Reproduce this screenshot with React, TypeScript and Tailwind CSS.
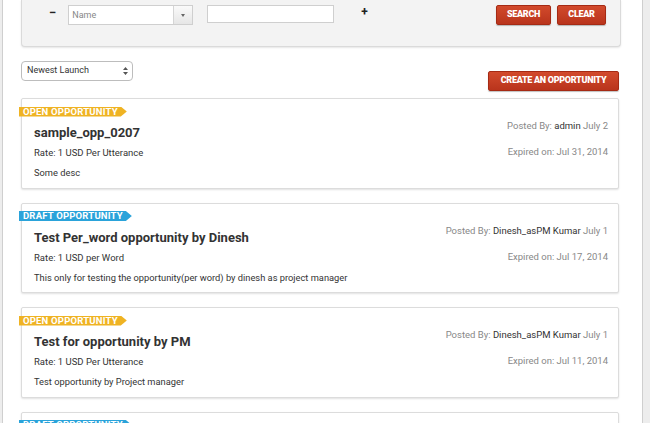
import React from "react";

type Opp = {
  status: "open" | "draft";
  title: string;
  rate: string;
  desc: string;
  poster: string;
  posted: string;
  expires: string;
};

const opps: Opp[] = [
  {
    status: "open",
    title: "sample_opp_0207",
    rate: "Rate: 1 USD Per Utterance",
    desc: "Some desc",
    poster: "admin",
    posted: "July 2",
    expires: "Jul 31, 2014",
  },
  {
    status: "draft",
    title: "Test Per_word opportunity by Dinesh",
    rate: "Rate: 1 USD per Word",
    desc: "This only for testing the opportunity(per word) by dinesh as project manager",
    poster: "Dinesh_asPM Kumar",
    posted: "July 1",
    expires: "Jul 17, 2014",
  },
  {
    status: "open",
    title: "Test for opportunity by PM",
    rate: "Rate: 1 USD Per Utterance",
    desc: "Test opportunity by Project manager",
    poster: "Dinesh_asPM Kumar",
    posted: "July 1",
    expires: "Jul 11, 2014",
  },
  {
    status: "draft",
    title: "Another draft opportunity",
    rate: "Rate: 1 USD per Word",
    desc: "Draft description",
    poster: "admin",
    posted: "June 30",
    expires: "Jul 10, 2014",
  },
];

const StatusTag: React.FC<{ status: Opp["status"] }> = ({ status }) => (
  <div
    className={`absolute left-[-3px] top-[7.5px] flex h-[10px] items-center pl-[4px] pr-[9px] text-[9.5px] font-bold leading-none tracking-[0.2px] text-white [clip-path:polygon(0_0,calc(100%-6px)_0,100%_50%,calc(100%-6px)_100%,0_100%)] ${
      status === "open" ? "bg-[#efb323]" : "bg-[#2aa3da]"
    }`}
  >
    {status === "open" ? "OPEN OPPORTUNITY" : "DRAFT OPPORTUNITY"}
  </div>
);

const OppCard: React.FC<{ opp: Opp }> = ({ opp }) => (
  <div className="relative w-[598px] shrink-0 rounded-[2px] border border-[#dcdcdc] bg-white shadow-[0_1px_2px_rgba(0,0,0,0.12)]">
    <StatusTag status={opp.status} />
    <div className="flex items-start justify-between pl-[12px] pr-[10px] pb-[7.5px]">
      <div className="flex flex-col pt-[24px]">
        <h3 className="h-[20px] text-[13px] font-bold leading-[20px] text-[#333]">
          {opp.title}
        </h3>
        <div className="mt-[3px] h-[14px] text-[9.5px] leading-[14px] text-[#333]">
          {opp.rate}
        </div>
        <div className="mt-[6px] h-[14px] text-[9.3px] leading-[14px] text-[#333]">
          {opp.desc}
        </div>
      </div>
      <div className="flex flex-col items-end pt-[20px] text-[9.5px] leading-[14px] text-[#888]">
        <div>
          Posted By: <span className="text-[#333]">{opp.poster}</span> {opp.posted}
        </div>
        <div className="mt-[12px]">Expired on: {opp.expires}</div>
      </div>
    </div>
  </div>
);

const RedButton: React.FC<{ label: string; className?: string }> = ({ label, className }) => (
  <button
    className={`flex h-[20px] items-center justify-center rounded-[2px] border border-[#a52a14] bg-gradient-to-b from-[#d24a2c] to-[#b9341c] text-[9px] font-black tracking-[-0.3px] text-white shadow-[0_1px_1px_rgba(0,0,0,0.25)] ${className ?? ""}`}
  >
    {label}
  </button>
);

export default function App() {
  return (
    <div className="h-[423px] w-[650px] overflow-hidden bg-[#ededed] font-['Roboto','Liberation_Sans',sans-serif]">
      <div className="ml-[2px] flex h-full w-[641px] flex-col border-x border-[#cfcfcf] bg-white pl-[18px]">
        <div className="flex h-[47px] w-[600px] shrink-0 items-start rounded-b-[4px] border-x border-b border-[#dadada] bg-[#f3f3f3] pt-[5px] pl-[27px] pr-[14px] shadow-[0_1px_2px_rgba(0,0,0,0.1)]">
          <span className="mt-[1px] text-[13px] font-bold leading-[14px] text-[#222]">−</span>
          <div className="ml-[12px] flex h-[20px] w-[125px] border border-[#cfcfcf] bg-white">
            <span className="flex-1 pl-[3px] text-[9px] leading-[18px] text-[#888]">Name</span>
            <span className="flex w-[19px] items-center justify-center border-l border-[#d5d5d5] bg-gradient-to-b from-[#fafafa] to-[#e6e6e6]">
              <span className="h-0 w-0 border-x-[2.5px] border-t-[3px] border-x-transparent border-t-[#666]" />
            </span>
          </div>
          <div className="ml-[14px] h-[18px] w-[127px] border border-[#cfcfcf] bg-white" />
          <span className="ml-[27px] text-[12px] font-bold leading-[14px] text-[#222]">+</span>
          <RedButton label="SEARCH" className="ml-auto w-[55px]" />
          <RedButton label="CLEAR" className="ml-[6px] w-[49px]" />
        </div>

        <div className="mt-[14px] flex w-[598px] shrink-0 items-start justify-between">
          <div className="flex h-[20px] w-[112px] items-center justify-between rounded-[4px] border border-[#bdbdbd] bg-white pl-[5px] pr-[4px] text-[9px] text-[#333]">
            <span>Newest Launch</span>
            <svg width="5" height="8" viewBox="0 0 5 8">
              <path d="M2.5 0 L5 3 L0 3 Z M2.5 8 L5 5 L0 5 Z" fill="#555" />
            </svg>
          </div>
          <RedButton label="CREATE AN OPPORTUNITY" className="mt-[10px] w-[131px]" />
        </div>

        <div className="mt-[7px] flex flex-col gap-[14px]">
          {opps.map((o, i) => (
            <OppCard key={i} opp={o} />
          ))}
        </div>
      </div>
    </div>
  );
}
